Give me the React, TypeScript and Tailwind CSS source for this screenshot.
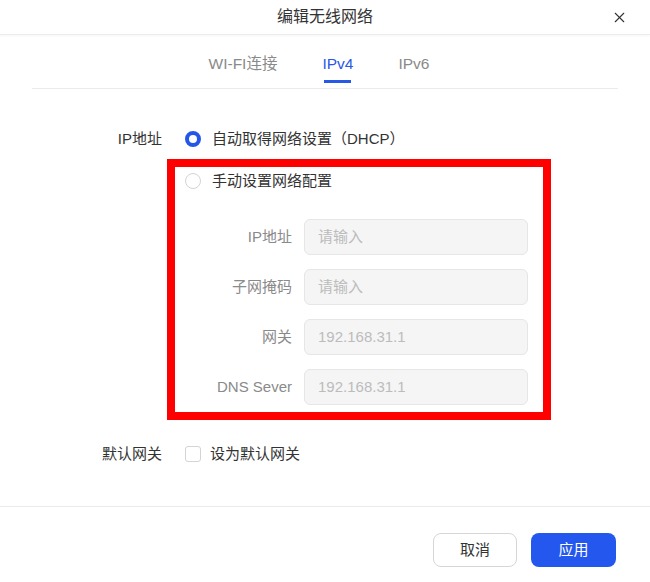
import { X } from "lucide-react";

const tabs = [
  { key: "wifi", label: "WI-FI连接" },
  { key: "ipv4", label: "IPv4" },
  { key: "ipv6", label: "IPv6" },
];

const fields = [
  { label: "IP地址", placeholder: "请输入" },
  { label: "子网掩码", placeholder: "请输入" },
  { label: "网关", placeholder: "192.168.31.1" },
  { label: "DNS Sever", placeholder: "192.168.31.1" },
];

function Radio({ checked }: { checked: boolean }) {
  return (
    <span
      className={[
        "box-border block h-4 w-4 flex-none rounded-full bg-white",
        checked ? "border-[4px] border-[#2457e8]" : "border border-[#d4d4d4]",
      ].join(" ")}
    />
  );
}

export default function App() {
  return (
    <div
      className="flex h-[582px] w-[650px] flex-col bg-white text-[15px] text-[#333]"
      style={{ fontFamily: '"Liberation Sans", "Noto Sans CJK SC", sans-serif' }}
    >
      {/* header */}
      <div className="relative flex h-[35px] flex-none items-center justify-center border-b border-[#ececec] shadow-[0_1px_2px_rgba(0,0,0,0.04)]">
        <span className="text-[16px] text-[#333]">编辑无线网络</span>
        <button className="absolute right-[22px] top-[9px] text-[#333]">
          <X size={17} strokeWidth={1.6} />
        </button>
      </div>

      {/* tabs */}
      <div className="mx-[32px] flex flex-none justify-center gap-[45px] border-b border-[#ebebeb] pr-[12px] pt-[18px]">
        {tabs.map((tab) => {
          const active = tab.key === "ipv4";
          return (
            <div key={tab.key} className="flex flex-col items-center">
              <span
                className={[
                  "h-[22px] text-[15.5px] leading-[22px]",
                  active ? "text-[#2858e6]" : "text-[#8a8a8a]",
                ].join(" ")}
              >
                {tab.label}
              </span>
              <span
                className={[
                  "mb-[5px] mt-[5px] h-[3px] w-[27px]",
                  active ? "bg-[#2858e6]" : "bg-transparent",
                ].join(" ")}
              />
            </div>
          );
        })}
      </div>

      {/* content */}
      <div className="flex-1">
        <div className="mt-[36px] flex h-7 items-center">
          <span className="w-[162px] text-right">IP地址</span>
          <span className="ml-[23px]">
            <Radio checked />
          </span>
          <span className="ml-[11px]">自动取得网络设置（DHCP）</span>
        </div>

        <div className="ml-[167px] mt-[6px] box-border w-[384px] border-[8px] border-[#ff0000] pb-[7px] pl-[10px]">
          <div className="flex h-7 items-center">
            <Radio checked={false} />
            <span className="ml-[11px]">手动设置网络配置</span>
          </div>
          <div className="mt-[24px] flex flex-col gap-[14px]">
            {fields.map((f) => (
              <div key={f.label} className="flex items-center">
                <span className="w-[107px] text-right text-[#8a8a8a]">{f.label}</span>
                <div className="ml-[12px] box-border flex h-9 w-[224px] items-center rounded-md border border-[#e6e6e6] bg-[#f5f5f5] px-[13px] text-[#bcbcbc]">
                  {f.placeholder}
                </div>
              </div>
            ))}
          </div>
        </div>

        <div className="mt-[20px] flex h-7 items-center">
          <span className="w-[162px] text-right">默认网关</span>
          <span className="ml-[23px] box-border block h-4 w-4 rounded-[3px] border border-[#d4d4d4] bg-white" />
          <span className="ml-[9px]">设为默认网关</span>
        </div>
      </div>

      {/* footer */}
      <div className="flex flex-none justify-end gap-[14px] border-t border-[#ebebeb] pb-[15px] pr-[34px] pt-[26px]">
        <button className="box-border h-[34px] w-[84px] rounded-lg border border-[#d6d6d6] bg-white text-[#333]">
          取消
        </button>
        <button className="h-[34px] w-[85px] rounded-lg bg-[#2457ee] text-white">应用</button>
      </div>
    </div>
  );
}
